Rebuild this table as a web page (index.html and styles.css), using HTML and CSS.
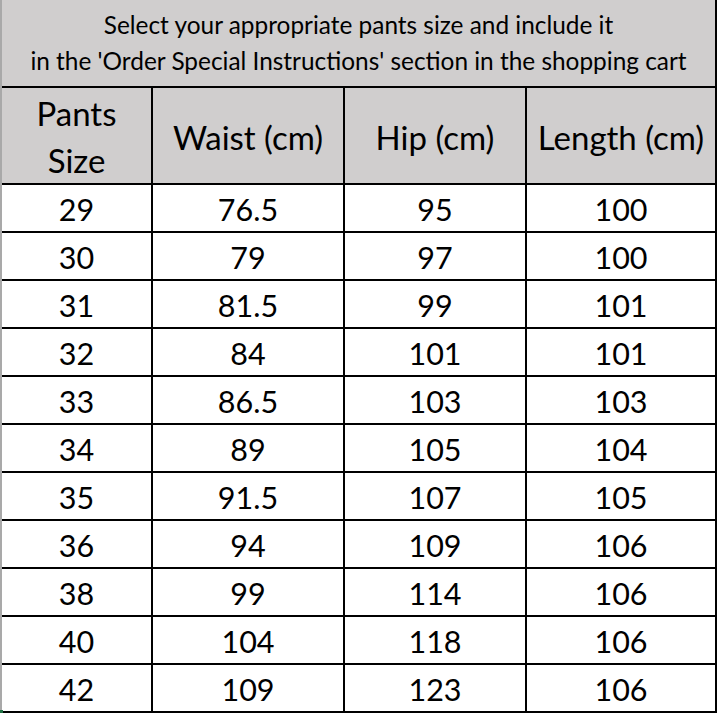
FILE: index.html
```html
<!DOCTYPE html>
<html lang="en">
<head>
<meta charset="utf-8">
<title>Pants Size Chart</title>
<link rel="stylesheet" href="styles.css">
</head>
<body>
<div class="sheet">
  <div class="cell title">Select your appropriate pants size and include it<br>in the 'Order Special Instructions' section in the shopping cart</div>
  <div class="cell head two">Pants<br>Size</div>
  <div class="cell head">Waist (cm)</div>
  <div class="cell head">Hip (cm)</div>
  <div class="cell head">Length (cm)</div>

  <div class="cell">29</div><div class="cell">76.5</div><div class="cell">95</div><div class="cell">100</div>
  <div class="cell">30</div><div class="cell">79</div><div class="cell">97</div><div class="cell">100</div>
  <div class="cell">31</div><div class="cell">81.5</div><div class="cell">99</div><div class="cell">101</div>
  <div class="cell">32</div><div class="cell">84</div><div class="cell">101</div><div class="cell">101</div>
  <div class="cell">33</div><div class="cell">86.5</div><div class="cell">103</div><div class="cell">103</div>
  <div class="cell">34</div><div class="cell">89</div><div class="cell">105</div><div class="cell">104</div>
  <div class="cell">35</div><div class="cell">91.5</div><div class="cell">107</div><div class="cell">105</div>
  <div class="cell">36</div><div class="cell">94</div><div class="cell">109</div><div class="cell">106</div>
  <div class="cell">38</div><div class="cell">99</div><div class="cell">114</div><div class="cell">106</div>
  <div class="cell">40</div><div class="cell">104</div><div class="cell">118</div><div class="cell">106</div>
  <div class="cell">42</div><div class="cell">109</div><div class="cell">123</div><div class="cell">106</div>
  <div class="select-mark"></div>
</div>
</body>
</html>
```
FILE: styles.css
```css
html, body {
  margin: 0;
  padding: 0;
  background: #ffffff;
}
body {
  font-family: "Lato", "Open Sans", sans-serif;
  color: #000000;
}
.sheet {
  position: relative;
  display: grid;
  grid-template-columns: 151px 192px 182px 190px;
  grid-template-rows: 88px 97px repeat(11, 48px);
  width: 715px;
  border-left: 2px solid #a9a9a9;
}
.cell {
  box-sizing: border-box;
  border-right: 2px solid #000000;
  border-bottom: 2px solid #000000;
  display: flex;
  align-items: center;
  justify-content: center;
  text-align: center;
  font-size: 30.5px;
  line-height: 34px;
  padding-top: 2px;
}
.title {
  grid-column: 1 / -1;
  background: #d0cece;
  font-size: 24.4px;
  line-height: 36px;
  padding-top: 0;
}
.head {
  background: #d0cece;
  font-size: 33px;
  line-height: 47px;
  padding-top: 3px;
}
.select-mark {
  position: absolute;
  left: -2px;
  bottom: -4px;
  width: 3px;
  height: 7px;
  background: #217346;
}
```
